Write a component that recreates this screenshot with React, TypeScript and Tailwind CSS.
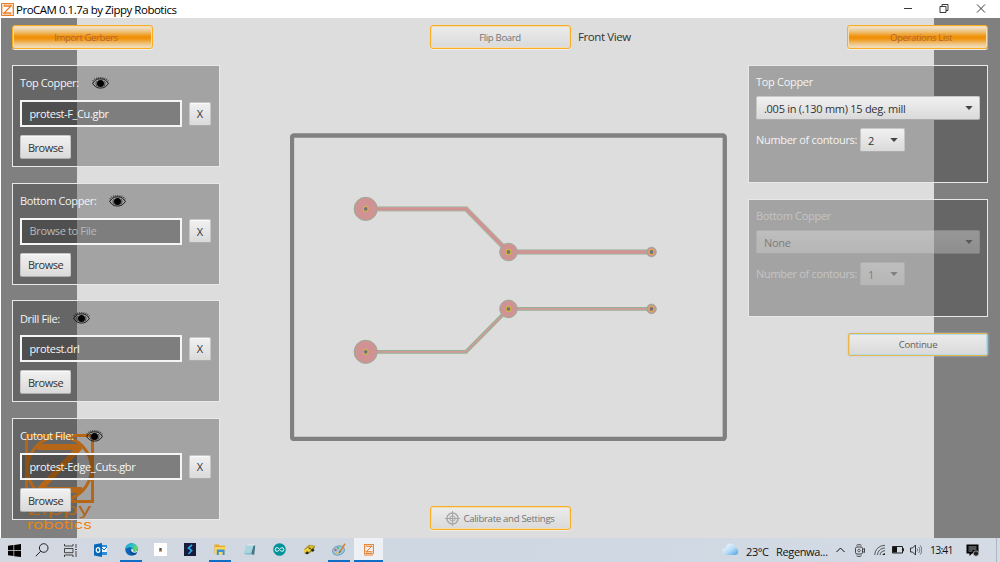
import React from "react";

const FONT = "font-['Open_Sans','Noto_Sans',sans-serif]";

function Eye() {
  return (
    <svg width="17" height="13" viewBox="0 0 17 13" className="block" fill="none" stroke="#0a0a0a">
      <path d="M.7 6.400C3 2.600 5.600 1.900 8.500 1.900s5.500.7 7.800 4.500C14 10.200 11.400 11 8.500 11S3 10.200.7 6.400Z" strokeWidth="1" />
      <circle cx="8.500" cy="6.500" r="3.500" fill="#000" stroke="none" />
      <path d="M4.800 4.200c-1.200 1.600-1 4 .4 5.200M12.200 4.200c1.200 1.600 1 4-.4 5.200" strokeWidth=".7" />
      <path d="M1.300 4.200.8 3M3 2.900 2.300 1.500M4.900 2 4.400.5M6.800 1.700 6.600.2M8.800 1.600V0M10.700 1.800l.4-1.500M12.500 2.300l.7-1.500M14.200 3.200l.9-1.300M15.500 4.400l.9-1" strokeWidth=".7" />
    </svg>
  );
}

function Button({ children, className }: { children: React.ReactNode; className: string }) {
  return (
    <button
      className={
        "flex items-center justify-center rounded-[2px] border border-[#c6c6c6] border-b-[#adadad] bg-linear-to-b from-[#f1f1f1] to-[#dadada] text-[11px] leading-none text-[#333] shadow-[inset_0_1px_0_#fafafa] " +
        className
      }
    >
      {children}
    </button>
  );
}

const outlined =
  "flex h-6 w-[141px] shrink-0 items-center justify-center rounded-[3px] border border-[#f9ae22] text-[9.600px] leading-none shadow-[0_1px_0_#eee,inset_0_0_0_1px_#f4dcae] ";

function GoldButton({ children }: { children: React.ReactNode }) {
  return (
    <button className={outlined + "bg-[linear-gradient(#eee3d1_4%,#efc37d_25%,#f09108_48%,#f09108_57%,#efc27b_80%,#eee0c8_98%)] pl-[7px] pt-px tracking-[-0.400px] text-[#b36530]"}>
      {children}
    </button>
  );
}

function FilePanel({ label, value, empty }: { label: string; value: string; empty?: boolean }) {
  return (
    <section className="h-[102px] w-[208px] border border-[#e8e8e8] bg-[rgba(52,52,52,0.344)] px-[7px] pt-[9px]">
      <div className="flex h-[17px] items-center gap-[13px] text-[11px] tracking-[-0.380px] text-[#f4f4f4]">
        <span>{label}</span>
        <Eye />
      </div>
      <div className="mt-2 flex items-center justify-between">
        <div
          className={
            "flex h-[27px] w-[162px] items-center border-2 border-[#f5f5f5] bg-[rgba(5,5,5,0.23)] pl-[7.500px] pt-px text-[11px] tracking-[-0.360px] " +
            (empty ? "text-[#b9b9b9]" : "text-[#f6f6f6]")
          }
        >
          {value}
        </div>
        <Button className="mr-[1px] h-6 w-[22px]">X</Button>
      </div>
      <Button className="mt-2 h-6 w-[51px] tracking-[-0.500px]">Browse</Button>
    </section>
  );
}

function Select({ value, className }: { value: string; className: string }) {
  return (
    <div
      className={
        "flex h-6 items-center justify-between rounded-[2px] border border-[#c6c6c6] border-b-[#adadad] bg-linear-to-b from-[#f1f1f1] to-[#dadada] pl-[7px] pr-[6px] text-[11px] leading-none text-[#333] " +
        className
      }
    >
      <span>{value}</span>
      <svg width="8" height="4" viewBox="0 0 8 4"><path d="M.3 0h7.400L4 4Z" fill="#444" /></svg>
    </div>
  );
}

function MillPanel({ title, tool, count, disabled }: { title: string; tool: string; count: string; disabled?: boolean }) {
  const dim = disabled ? "opacity-40" : "";
  const dimBox = disabled ? "opacity-35" : "";
  return (
    <section className="h-[118px] w-[240px] border border-[#e8e8e8] bg-[rgba(52,52,52,0.344)] px-[7px] pt-[7px] text-[11px] text-[#f4f4f4]">
      <div className={"h-[17px] leading-[17px] tracking-[-0.300px] " + dim}>{title}</div>
      <div className={"mt-[6px] " + dimBox}>
        <Select value={tool} className="w-[224px] tracking-[-0.280px]" />
      </div>
      <div className="mt-2 flex h-6 items-center">
        <span className={"w-[104px] whitespace-nowrap tracking-[-0.320px] " + dim}>{"Number of contours:"}</span>
        <div className={dimBox}>
          <Select value={count} className="w-[45px]" />
        </div>
      </div>
    </section>
  );
}

function ZippyLogo() {
  return (
    <svg className="absolute left-6 top-[415px]" width="72" height="99" viewBox="24 433 72 99" fill="none" stroke="#f98208">
      <rect x="26.500" y="435.500" width="66" height="66" strokeWidth="3" />
      <circle cx="59.500" cy="468.500" r="32" strokeWidth="3" />
      <path d="M37 447H80L39 490H82" strokeWidth="6" strokeLinejoin="bevel" />
      <g fill="#ee8212" stroke="none" fontFamily="Inter, sans-serif">
        <text x="27" y="515" fontSize="15" textLength="65" lengthAdjust="spacingAndGlyphs">zippy</text>
        <text x="27" y="528.500" fontSize="12" textLength="65" lengthAdjust="spacingAndGlyphs">robotics</text>
      </g>
    </svg>
  );
}

function Pad({ x, y, r }: { x: number; y: number; r: number }) {
  return (
    <g>
      <circle cx={x} cy={y} r={r} fill="#d09292" stroke="#98ad98" strokeWidth="1" />
      <circle cx={x} cy={y} r="2.900" fill="#d6b93a" />
      <circle cx={x} cy={y} r="1.900" fill="#707478" />
    </g>
  );
}

function Board() {
  const top = "M365.700 208.900H466L508.500 252H651.500";
  const low = "M365.700 351.800H466L508.500 308.900H651.500";
  return (
    <svg width="437" height="308" viewBox="290 133 437 308" fill="none" className="block">
      <rect x="292" y="135.500" width="432.800" height="303.500" rx="2" stroke="#808080" strokeWidth="4.300" />
      <path d={top} stroke="#a9bda9" strokeWidth="5.400" />
      <path d={top} stroke="#d09292" strokeWidth="3.300" />
      <path d={low} stroke="#96b096" strokeWidth="3.800" />
      <path d={low} stroke="#d09b98" strokeWidth="1.800" />
      <Pad x={365.700} y={208.900} r={11.600} />
      <Pad x={508.500} y={252} r={8.800} />
      <Pad x={651.500} y={252} r={4.800} />
      <Pad x={365.700} y={351.800} r={11.600} />
      <Pad x={508.500} y={308.900} r={8.800} />
      <Pad x={651.500} y={308.900} r={4.800} />
    </svg>
  );
}

function ZMark({ size }: { size: number }) {
  return (
    <svg width={size} height={size} viewBox="0 0 13 13" fill="none" stroke="#e87c24">
      <rect x=".6" y=".6" width="11.800" height="11.800" strokeWidth="1.100" />
      <circle cx="6.500" cy="6.500" r="5.700" strokeWidth=".6" />
      <path d="M3 3h7L3 10h7" strokeWidth="1.300" />
    </svg>
  );
}

function Slot({ children, open, active }: { children: React.ReactNode; open?: boolean; active?: boolean }) {
  return (
    <div
      className={
        "flex h-6 w-[29.700px] shrink-0 items-center justify-center " +
        (active ? "border-b-2 border-[#0f6fc6] bg-[#edf1f5]" : "")
      }
    >
      <div className={"flex h-6 w-[22px] items-center justify-center border-b-2 pt-px " + (open ? "border-[#0f6fc6]" : "border-transparent")}>
        {children}
      </div>
    </div>
  );
}

function Taskbar() {
  return (
    <footer className="flex h-6 items-center bg-linear-to-r from-[#d3d8e1] via-[#ced7e2] to-[#d4dbe5]">
      <div className="flex w-[86.500px] shrink-0 items-center pl-2">
        <svg width="13" height="13" viewBox="0 0 13 13" fill="#000"><path d="M0 1.800 5.500 1v5.200H0ZM6.200.9 13 0v6.200H6.200ZM0 6.900h5.500v5.200L0 11.300ZM6.200 6.900H13V13l-6.800-.8Z" /></svg>
        <svg width="14" height="14" viewBox="0 0 14 14" fill="none" stroke="#222" strokeWidth="1" className="ml-[14px]"><circle cx="8.700" cy="5" r="4.300" /><path d="M5.700 8.200.8 13.200" /></svg>
        <svg width="14" height="13" viewBox="0 0 14 13" fill="none" stroke="#333" strokeWidth=".9" className="ml-[15px]"><path d="M.5 0v2h8.500V0M.5 13v-2h8.500v2M.5 4.500H9v4.200H.5ZM12 0v4M12 7v6M11 5.500h2" /></svg>
      </div>
      <Slot>
        <svg width="14" height="14" viewBox="0 0 14 14">
          <path d="M6 2h7v10H6Z" fill="#2d8cdc" /><path d="M7 4h6v5H7Z" fill="#eef7ff" /><path d="m7 4 3 3 3-3" stroke="#0872c4" fill="none" />
          <path d="M0 1.500 8 0v14l-8-1.500Z" fill="#0868b8" /><ellipse cx="4" cy="7" rx="1.800" ry="2.300" fill="none" stroke="#fff" strokeWidth="1.200" />
        </svg>
      </Slot>
      <Slot open>
        <svg width="13" height="13" viewBox="0 0 14 14">
          <defs><linearGradient id="edge" x1="0" y1="0" x2="1" y2=".6"><stop stopColor="#219bd8" /><stop offset=".5" stopColor="#2fc2c8" /><stop offset="1" stopColor="#6bd957" /></linearGradient></defs>
          <circle cx="7" cy="7" r="6.700" fill="#0c66b5" />
          <path d="M.3 7C.3 2.800 3.500.3 7 .3s6.700 2.900 6.700 5.700c0 2.200-1.700 3.400-3.700 3.400-1.300 0-1.700-.5-1.500-1.100.8-2-.5-3.600-2.600-3.600C3 4.700 1 6 .3 7Z" fill="url(#edge)" />
          <path d="M6.700 6C5 7.500 6 11 10 11c1.300 0 2.300-.5 3-1-.8 2-1.800 2.500-2.500 3C6.500 13.500 3 9 6.700 6Z" fill="#08458e" />
          <path d="M7.300 6C6 7 6.500 9.800 9 10.300c1.800.4 3-.1 4.500-1.200V8.200C12 9.700 9 9.800 8.500 8.500 9 7.500 8.400 6.200 7.300 6Z" fill="#e8f2f6" />
        </svg>
      </Slot>
      <Slot>
        <svg width="13" height="13" viewBox="0 0 13 13"><path d="M0 0h13v13H0Z" fill="#fff" /><path d="M5.300 5h2.400v3H5.300Z" fill="#555" /><path d="M5 8.300h3" stroke="#e09c48" /></svg>
      </Slot>
      <Slot>
        <svg width="12" height="13" viewBox="0 0 13 13" preserveAspectRatio="none"><path d="M0 0h13v13H0Z" fill="#181b3c" /><path d="M8.700 2 4.800 5l3.500 2.500L4.800 11" stroke="#28a8e8" strokeWidth="1.700" fill="none" /></svg>
      </Slot>
      <Slot open>
        <svg width="12" height="11" viewBox="0 0 13 12"><path d="M.5.500H5l1 1.300h6v9H.5Z" fill="#e8a820" /><path d="M1 3.300h12v8H1Z" fill="#ffd75c" /><path d="M3 6h8.500v6H9.300V8.700H5.200V12H3Z" fill="#3b93d4" /></svg>
      </Slot>
      <Slot>
        <svg width="13" height="12" viewBox="0 0 14 13"><path d="M4 .8 13 2l-1.500 10-10-1Z" fill="#82b9cb" /><path d="M4 .8 11.500 1.500 9 10 .8 9.800Z" fill="#a9d5df" /><path d="M11.500 1.500 13.200 2 12 12l-3-2Z" fill="#47717f" /><path d="M4 1h8" stroke="#eee" /></svg>
      </Slot>
      <Slot>
        <svg width="13" height="13" viewBox="0 0 13 13"><circle cx="6.500" cy="6.500" r="6.300" fill="#00949a" /><path d="M6.500 6.500C5.500 5 4.700 4.700 4 4.700a1.800 1.800 0 0 0 0 3.600c.7 0 1.500-.3 2.500-1.800S8.300 4.700 9 4.700a1.800 1.800 0 0 1 0 3.600c-.7 0-1.500-.3-2.500-1.800Z" fill="none" stroke="#fff" /></svg>
      </Slot>
      <Slot>
        <svg width="13" height="11" viewBox="0 0 14 12"><path d="M1 6 6.500.800 13 2l-1 4-5 4-5 1Z" fill="#a08b22" /><path d="m1 6.500 5-3 3 2.500-4 4-4-1Z" fill="#f0cf3e" /><path d="m5 4 2-2.500L12 2l-2.500 3.500Z" fill="#d6bd35" /><path d="m5.500 3.500 2 .5L9 6 7 5.500Z" fill="#333925" /><circle cx="4.500" cy="9.700" r="1.600" fill="#252a20" /><circle cx="10.500" cy="6.800" r="1.600" fill="#25321f" /></svg>
      </Slot>
      <Slot open>
        <svg width="14" height="13" viewBox="0 0 14 13"><ellipse cx="6.500" cy="7.500" rx="6" ry="4.500" fill="#9ccae4" stroke="#6b9fc0" transform="rotate(-15 6.500 7.500)" /><circle cx="3.500" cy="7" r="1.200" fill="#df594c" /><circle cx="6" cy="5" r="1" fill="#47af65" /><circle cx="5.500" cy="10" r="1.200" fill="#edb93a" /><path d="m13 .8-5 8" stroke="#d48737" strokeWidth="1.700" /><path d="m8.300 8-.8 2" stroke="#555" /></svg>
      </Slot>
      <Slot active>
        <div className="flex flex-col items-center pt-[2px]"><ZMark size={10} /><span className="h-[2px] w-[9px] bg-[#f2b78d]" /></div>
      </Slot>
      <div className="flex-1" />
      <svg width="17" height="13" viewBox="0 0 17 13" className="mb-px">
        <defs><linearGradient id="cloud" x1="0" y1="0" x2="1" y2="1"><stop stopColor="#fff" /><stop offset=".55" stopColor="#b7dcf8" /><stop offset="1" stopColor="#4b9fe0" /></linearGradient></defs>
        <path d="M4 12a3.500 3.500 0 0 1-.5-7C4.500 1.500 7 .3 9 .5c2.500.2 4 2 4.300 4.200A3.700 3.700 0 0 1 13 12Z" fill="url(#cloud)" />
      </svg>
      <div className="flex w-[89px] shrink-0 items-center whitespace-nowrap pl-[7px] pt-[2px] text-[11px] leading-none text-[#111]">
        <span className="w-[30px] tracking-[-0.400px]">23°C</span>
        <span className="tracking-[-0.350px]">Regenwa...</span>
      </div>
      <div className="flex w-[172px] shrink-0 items-center">
        <svg width="9" height="6" viewBox="0 0 9 6" fill="none" stroke="#111" className="ml-2"><path d="m.5 5 4-4 4 4" /></svg>
        <svg width="10" height="13" viewBox="0 0 10 13" fill="none" stroke="#333" strokeWidth=".9" className="ml-[10px]"><rect x=".5" y="3" width="7" height="7" rx="1.500" /><circle cx="4" cy="6.500" r="1.300" strokeWidth=".7" /><path d="m7.500 5.500 2-1v4l-2-1M1.500 1.300c1.500-.8 3.500-.8 5 0M1.500 11.800c1.500.8 3.500.8 5 0" /></svg>
        <svg width="12" height="12" viewBox="0 0 12 12" fill="none" stroke="#333" className="ml-[9px]"><path d="M.8 11C1 5.500 5 1.500 11 1.300M3.500 11C3.800 7 6.500 4.200 11 4M6 11c.3-2.500 2-4.200 5-4.300" strokeWidth=".8" /><path d="M8.500 11c.2-1 1-1.800 2.500-1.800V11Z" fill="#222" stroke="none" /></svg>
        <svg width="12" height="8" viewBox="0 0 12 8" className="ml-[6px]"><path d="M.5.500h10v6.500H.5ZM10.500 2.500h1v2.500h-1" fill="none" stroke="#222" /><path d="M1 1h4v5.500H1Z" fill="#111" /></svg>
        <svg width="12" height="12" viewBox="0 0 12 12" fill="none" stroke="#333" className="ml-[6px]"><path d="M.5 4h2L5.500 1v10l-3-3h-2Z" /><path d="M7 4.500c.8 1 .8 2 0 3M8.700 3c1.500 2 1.500 4 0 6M10.300 1.500c2 3 2 6 0 9" strokeWidth=".6" /></svg>
        <span className="ml-2 w-[36px] pt-px text-[10.500px] leading-none tracking-[-0.800px] text-[#111]">13:41</span>
        <svg width="13" height="13" viewBox="0 0 13 13"><path d="M.5.500h12v9H6L3.500 12V9.500h-3Z" fill="#000" /><path d="M2.500 3h8M2.500 5h8M2.500 7h4" stroke="#cbd2db" strokeWidth=".8" /><circle cx="10" cy="9.500" r="2.700" fill="#222" stroke="#cbd2db" strokeWidth=".7" /></svg>
        <i className="ml-auto mr-[3px] h-6 w-px shrink-0 bg-[#aeb6c0]" />
      </div>
    </footer>
  );
}

export default function App() {
  return (
    <div className={"h-[562px] w-[1000px] overflow-hidden bg-white " + FONT}>
      <header className="flex h-[18px] items-center bg-white pl-px text-black">
        <ZMark size={13} />
        <span className="ml-[2px] pt-px text-[11.500px] leading-none tracking-[-0.490px]">ProCAM 0.1.7a by Zippy Robotics</span>
        <svg width="84" height="10" viewBox="0 0 84 10" fill="none" stroke="#222" strokeWidth=".9" className="ml-auto mr-[14px]">
          <path d="M2 4.500h8M38 2.500h6v6h-6ZM40 2.500v-2h6v6h-2M75 .5l8 8M83 .5l-8 8" />
        </svg>
      </header>
      <main className="relative flex h-[520px] items-start bg-[linear-gradient(90deg,#fff_1px,#808080_1px,#808080_77px,#ddd_77px,#ddd_934px,#808080_934px)] pl-3 pt-[7px]">
        <ZippyLogo />
        <div className="relative flex w-[278px] flex-col">
          <GoldButton>Import Gerbers</GoldButton>
          <div className="mt-4 flex flex-col gap-[15.700px]">
            <FilePanel label="Top Copper:" value="protest-F_Cu.gbr" />
            <FilePanel label="Bottom Copper:" value="Browse to File" empty />
            <FilePanel label="Drill File:" value="protest.drl" />
            <FilePanel label="Cutout File:" value="protest-Edge_Cuts.gbr" />
          </div>
        </div>
        <div className="flex w-[458px] flex-col">
          <div className="flex items-center gap-[7.500px] pl-[139.500px]">
            <button className={outlined + "bg-linear-to-b from-[#ececec] to-[#dadada] pt-px tracking-[-0.350px] text-[#747474]"}>Flip Board</button>
            <span className="text-[11.500px] leading-none tracking-[-0.400px] text-[#333]">Front View</span>
          </div>
          <div className="mt-[84px]"><Board /></div>
          <div className="mt-[65px] pl-[139.500px]">
            <button className={outlined + "gap-[3px] bg-linear-to-b from-[#ececec] to-[#dadada] tracking-[-0.300px] text-[#747474]"}>
              <svg width="15" height="15" viewBox="0 0 15 15" fill="none" stroke="#a6a6a6"><circle cx="7.500" cy="7.500" r="5.500" strokeWidth="1.400" /><circle cx="7.500" cy="7.500" r="2.700" /><path d="M7.500 0v15M0 7.500h15" /></svg>
              <span className="pt-px">Calibrate and Settings</span>
            </button>
          </div>
        </div>
        <div className="flex w-[240px] flex-col">
          <div className="flex justify-end"><GoldButton>Operations List</GoldButton></div>
          <div className="mt-4 flex flex-col gap-4">
            <MillPanel title="Top Copper" tool=".005 in (.130 mm) 15 deg. mill" count="2" />
            <MillPanel title="Bottom Copper" tool="None" count="1" disabled />
          </div>
          <button className="mt-4 flex h-[23px] w-[140px] items-center justify-center self-end rounded-[2px] border border-[#e9b64a] bg-linear-to-b from-[#ececec] to-[#d9d9d9] pt-px text-[9.600px] leading-none tracking-[-0.250px] text-[#606060] shadow-[0_0_2px_#a9cfe3,inset_0_0_0_1px_#b5dbea]">
            Continue
          </button>
        </div>
      </main>
      <Taskbar />
    </div>
  );
}
